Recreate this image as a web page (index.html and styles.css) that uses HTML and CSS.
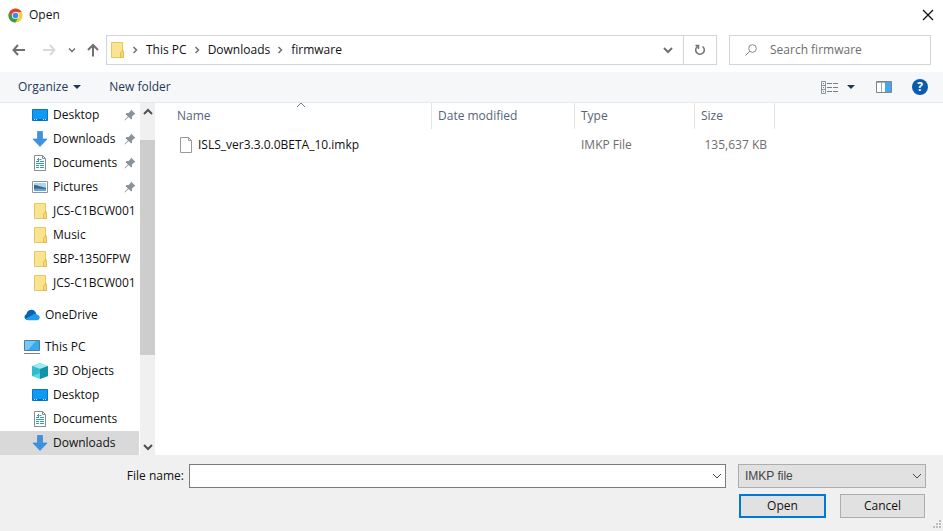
FILE: index.html
```html
<!DOCTYPE html>
<html lang="en">
<head>
<meta charset="utf-8">
<title>Open</title>
<meta name="viewport" content="width=device-width, initial-scale=1">
<link rel="stylesheet" href="styles.css">
</head>
<body>
<svg class="sprite" aria-hidden="true">
  <symbol id="folder" viewBox="0 0 16 16">
    <path d="M2.5.5h11v10h1v5h-12z" fill="#fbe48f" stroke="#e3c761"/>
    <path d="M11.5 15.5V11l1-1.500h1v-2l1 3v5z" fill="#f8d775" stroke="#dfbd4f"/>
  </symbol>
  <symbol id="desktop" viewBox="0 0 16 16">
    <path d="M.5 2.500h15v11H.5z" fill="#0d9bf5" stroke="#0877c4"/>
    <path d="M1 12h14v1.500H1z" fill="#0a6fb8"/>
    <path d="M2 12.500h1m1 0h1m6 0h1m1 0h1" stroke="#bfe6ff"/>
  </symbol>
  <symbol id="download" viewBox="0 0 16 16">
    <path d="M5.500.500h5V8h4.600L8 15.500.900 8h4.600z" fill="#3c93e0" stroke="#2f7fc9" stroke-width=".6"/>
  </symbol>
  <symbol id="document" viewBox="0 0 16 16">
    <path d="M2.500.500h8l3 3v12h-11z" fill="#fff" stroke="#858d94"/>
    <path d="M10.500.500v3h3" fill="none" stroke="#858d94"/>
    <path d="M7.500 4.500h2M8 6.500h4M4 8.500h8M4 10.500h3m1 0h4M4 12.500h3m1 0h4" stroke="#2fa3a3"/>
    <path d="M4 6.500h3M5 5l2-2M6.500 3v4" stroke="#4a8fb0"/>
  </symbol>
  <symbol id="picture" viewBox="0 0 16 16">
    <path d="M.5 2.500h15v11H.5z" fill="#fff" stroke="#8b959c"/>
    <path d="M2 4h12v8H2z" fill="#a9d4f2"/>
    <path d="M2 6c4 0 7 2 12 3v3H2z" fill="#31688f"/>
    <path d="M2 10c5-1 8 0 12 0v2H2z" fill="#6fa5c6"/>
  </symbol>
  <symbol id="cloud" viewBox="0 0 16 16">
    <path d="M3 13a3 3 0 0 1-.6-5.800A5 5 0 0 1 11.500 5l1 3-4 5z" fill="#0a62b5"/>
    <path d="M4 13.300a3 3 0 0 1-2.500-1.500L8 8.200a4 4 0 0 1 5.500-.4 2.800 2.800 0 0 1 0 5.500z" fill="#249be8"/>
  </symbol>
  <symbol id="computer" viewBox="0 0 16 16">
    <path d="M.5 1.500h15v10H.5z" fill="#36a9f1" stroke="#527d9c"/>
    <path d="M1 2h11L4 11H1z" fill="#75c9fa"/>
    <path d="M0 14.500h16" stroke="#76828b"/>
  </symbol>
  <symbol id="cube" viewBox="0 0 16 16">
    <path d="M0 3l8-3 8 3v10l-8 3-8-3z" fill="#5fd6de"/>
    <path d="M0 3l8-3 8 3-8 3z" fill="#9fe9ef"/>
    <path d="M8 6l8-3v10l-8 3z" fill="#1192ab"/>
    <path d="M0 3l8 3v4L0 13z" fill="#2fbccb"/>
  </symbol>
  <symbol id="pin" viewBox="0 0 12 12">
    <path d="M7 .5L11.500 5l-1.500.4-2 2 .1 2.100-1 1L4.600 8 1 11.500l-.5-.5L4 7.400 1.500 4.900l1-1 2.100.1 2-2z" fill="#8a9299"/>
  </symbol>
  <symbol id="down" viewBox="0 0 10 10">
    <path d="M1 3l4 4 4-4" fill="none" stroke="currentColor"/>
  </symbol>
  <symbol id="right" viewBox="0 0 6 8">
    <path d="M1.500 1l3 3-3 3" fill="none" stroke="#707070" stroke-width="1.500"/>
  </symbol>
</svg>

<header class="titlebar">
  <svg class="chrome" viewBox="0 0 16 16" aria-hidden="true">
    <circle cx="8" cy="8" r="7.500" fill="#f9cd3c"/>
    <path d="M1.500 4.250A7.500 7.500 0 0 0 8 15.500l3.200-5.600H4.800z" fill="#2f9e4f"/>
    <path d="M1.500 4.250A7.500 7.500 0 0 1 14.500 4.250H8L4.800 9.900z" fill="#dc4437"/>
    <circle cx="8" cy="8" r="3.800" fill="#fff"/>
    <circle cx="8" cy="8" r="3" fill="#4384ee"/>
  </svg>
  <h1 class="title">Open</h1>
  <button class="close" aria-label="Close"><svg viewBox="0 0 12 12"><path d="M1 1l10 10M11 1L1 11" stroke="#111" stroke-width="1.300"/></svg></button>
</header>

<nav class="navbar" aria-label="Location">
  <div class="history">
    <button class="arrow" aria-label="Back"><svg viewBox="0 0 14 14"><path d="M6 2L1.500 7 6 12M1.500 7H13"/></svg></button>
    <button class="arrow off" aria-label="Forward" disabled><svg viewBox="0 0 14 14"><path d="M8 2l4.500 5L8 12M12.500 7H1"/></svg></button>
    <button class="recent" aria-label="Recent locations"><svg viewBox="0 0 8 8"><path d="M1 2.500l3 3 3-3"/></svg></button>
    <button class="arrow" aria-label="Up"><svg viewBox="0 0 14 14"><path d="M2 7l5-5 5 5M7 2v11.500"/></svg></button>
  </div>
  <div class="address">
    <svg class="icon" aria-hidden="true"><use href="#folder"/></svg>
    <svg class="sep" aria-hidden="true"><use href="#right"/></svg>
    <a href="#pc">This PC</a>
    <svg class="sep" aria-hidden="true"><use href="#right"/></svg>
    <a href="#downloads">Downloads</a>
    <svg class="sep" aria-hidden="true"><use href="#right"/></svg>
    <a href="#firmware">firmware</a>
    <button class="drop" aria-label="Previous locations"><svg viewBox="0 0 10 10"><path d="M1 3l4 4 4-4"/></svg></button>
    <button class="refresh" aria-label="Refresh"><svg viewBox="0 0 12 12"><path d="M3.500 2.500a4.300 4.300 0 1 0 5 0M1.500 1.500h3v3.500"/></svg></button>
  </div>
  <label class="search">
    <svg viewBox="0 0 12 12" aria-hidden="true"><circle cx="7.500" cy="4.500" r="3.800"/><path d="M4.800 7.200L.5 11.500"/></svg>
    <input type="search" placeholder="Search firmware" aria-label="Search firmware">
  </label>
</nav>

<div class="toolbar">
  <button class="organize">Organize <svg viewBox="0 0 8 4" aria-hidden="true"><path d="M0 0h8L4 4z" fill="#1e3957"/></svg></button>
  <button>New folder</button>
  <div class="tools">
    <button class="view" aria-label="Change view">
      <svg viewBox="0 0 17 13"><path d="M.5.500h4v12h-4zM.5 4.500h4M.5 8.500h4" fill="none" stroke="#8b9299"/><path d="M2 2.500h1m-1 4h1m-1 4h1M6 2.500h5m1 0h5M6 6.500h5m1 0h5M6 10.500h5m1 0h5" stroke="#777f87"/></svg>
      <svg class="tri" viewBox="0 0 8 4"><path d="M0 0h8L4 4z" fill="#1e3957"/></svg>
    </button>
    <button class="preview" aria-label="Preview pane"><svg viewBox="0 0 16 12"><path d="M.5.500h15v11H.5z" fill="#fff" stroke="#7b858e"/><path d="M1 1.500h14M5.500 1v10" stroke="#a2aab1"/><path d="M9 1h6v10H9z" fill="#45a5ee"/></svg></button>
    <button class="help" aria-label="Help">?</button>
  </div>
</div>

<main class="content">
  <nav class="tree" aria-label="Folders">
    <ul>
      <li><a href="#d1"><svg class="icon"><use href="#desktop"/></svg>Desktop<svg class="pin"><use href="#pin"/></svg></a></li>
      <li><a href="#d2"><svg class="icon"><use href="#download"/></svg>Downloads<svg class="pin"><use href="#pin"/></svg></a></li>
      <li><a href="#d3"><svg class="icon"><use href="#document"/></svg>Documents<svg class="pin"><use href="#pin"/></svg></a></li>
      <li><a href="#d4"><svg class="icon"><use href="#picture"/></svg>Pictures<svg class="pin"><use href="#pin"/></svg></a></li>
      <li><a href="#d5"><svg class="icon"><use href="#folder"/></svg>JCS-C1BCW001</a></li>
      <li><a href="#d6"><svg class="icon"><use href="#folder"/></svg>Music</a></li>
      <li><a href="#d7"><svg class="icon"><use href="#folder"/></svg>SBP-1350FPW</a></li>
      <li><a href="#d8"><svg class="icon"><use href="#folder"/></svg>JCS-C1BCW001</a></li>
    </ul>
    <ul>
      <li><a class="root" href="#onedrive"><svg class="icon"><use href="#cloud"/></svg>OneDrive</a></li>
    </ul>
    <ul>
      <li><a class="root" href="#pc"><svg class="icon"><use href="#computer"/></svg>This PC</a></li>
      <li><a href="#p1"><svg class="icon"><use href="#cube"/></svg>3D Objects</a></li>
      <li><a href="#p2"><svg class="icon"><use href="#desktop"/></svg>Desktop</a></li>
      <li><a href="#p3"><svg class="icon"><use href="#document"/></svg>Documents</a></li>
      <li><a class="selected" href="#p4" aria-current="true"><svg class="icon"><use href="#download"/></svg>Downloads</a></li>
    </ul>
  </nav>
  <div class="scrollbar">
    <button class="flip" aria-label="Scroll up"><svg viewBox="0 0 10 10"><path d="M1 3l4 4 4-4"/></svg></button>
    <div class="track"><div class="thumb"></div></div>
    <button aria-label="Scroll down"><svg viewBox="0 0 10 10"><path d="M1 3l4 4 4-4"/></svg></button>
  </div>
  <section class="files">
    <table>
      <thead>
        <tr><th class="c-name" aria-sort="ascending">Name<svg class="sort" viewBox="0 0 10 10" aria-hidden="true"><path d="M1 7l4-4 4 4" fill="none" stroke="#777"/></svg></th><th class="c-date">Date modified</th><th class="c-type">Type</th><th class="c-size">Size</th><td></td></tr>
      </thead>
      <tbody>
        <tr><td class="name"><div class="file"><svg class="icon" viewBox="0 0 16 16" aria-hidden="true"><path d="M2.500.500h8l3 3v12h-11z" fill="#fdfdfd" stroke="#999"/><path d="M10.500.500v3h3" fill="none" stroke="#999"/></svg>ISLS_ver3.3.0.0BETA_10.imkp</div></td><td></td><td>IMKP File</td><td class="size">135,637 KB</td><td></td></tr>
      </tbody>
    </table>
  </section>
</main>

<footer class="footer">
  <label class="flabel" for="filename">File name:</label>
  <div class="combo">
    <input id="filename" type="text">
    <svg aria-hidden="true"><use href="#down"/></svg>
  </div>
  <div class="side">
    <div class="combo type">
      <select aria-label="File type"><option>IMKP file</option></select>
      <svg aria-hidden="true"><use href="#down"/></svg>
    </div>
    <div class="actions">
      <button class="btn primary">Open</button>
      <button class="btn">Cancel</button>
    </div>
  </div>
  <svg class="grip" viewBox="0 0 10 10" aria-hidden="true"><path d="M7 0h2v2H7zM4 3h2v2H4zM7 3h2v2H7zM1 6h2v2H1zM4 6h2v2H4zM7 6h2v2H7z" fill="#bdbdbd"/></svg>
</footer>
</body>
</html>
```
FILE: styles.css
```css
* { box-sizing: border-box; }

body {
  margin: 0;
  min-height: 100vh;
  display: flex;
  flex-direction: column;
  background: #fff;
  color: #111;
  font: 12px/16px "Open Sans", "Noto Sans", sans-serif;
}

button, input, select { font: inherit; color: inherit; margin: 0; }
button { border: 0; padding: 0; background: none; display: flex; align-items: center; justify-content: center; }
a { color: inherit; text-decoration: none; }
ul { list-style: none; margin: 0; padding: 0; }
svg { display: block; flex: none; }
.sprite { position: absolute; width: 0; height: 0; }
.icon { width: 16px; height: 16px; }

/* Title bar */
.titlebar { display: flex; align-items: center; height: 30px; padding: 0 9px 0 8px; }
.chrome { width: 15px; height: 15px; }
.title { flex: 1; margin: 0 0 0 6px; font-size: 12px; font-weight: 400; }
.close svg { width: 12px; height: 12px; }

/* Navigation bar */
.navbar { display: flex; align-items: center; height: 40px; margin-bottom: 2px; padding: 0 12px; gap: 12px; }
.history { display: flex; align-items: center; width: 88px; }
.history svg, .drop svg, .refresh svg, .scrollbar svg { fill: none; stroke: #707070; stroke-width: 2; }
.arrow { width: 14px; }
.arrow svg { width: 14px; height: 14px; }
.arrow.off { margin-left: 16px; }
.arrow.off svg { stroke: #d9d9d9; }
.recent { margin: 0 10px 0 12px; }
.recent svg { width: 8px; height: 8px; stroke-width: 1.500; }
.address {
  flex: 1;
  display: flex;
  align-items: center;
  height: 30px;
  margin-left: -6px;
  padding-left: 2px;
  border: 1px solid #d4d4d4;
}
.sep { width: 6px; height: 8px; margin: 0 8px 0 7px; }
.drop { margin-left: auto; width: 30px; height: 100%; }
.drop svg { width: 10px; height: 10px; }
.refresh { width: 33px; height: 100%; border-left: 1px solid #d4d4d4; }
.refresh svg { width: 12px; height: 12px; stroke-width: 1.500; }
.search { display: flex; align-items: center; gap: 13px; width: 202px; height: 30px; padding-left: 15px; border: 1px solid #d4d4d4; }
.search svg { width: 12px; height: 12px; fill: none; stroke: #888; }
.search input { flex: 1; min-width: 0; border: 0; padding: 0; outline: 0; background: none; }
.search input::placeholder { color: #6d6d6d; opacity: 1; }

/* Command bar */
.toolbar {
  display: flex;
  align-items: center;
  gap: 28px;
  height: 31px;
  padding: 0 15px 0 18px;
  background: #f6f7f9;
  border-bottom: 1px solid #e6e8ec;
  color: #1e3957;
}
.organize { gap: 5px; }
.organize svg, .tri { width: 8px; height: 4px; }
.tools { display: flex; align-items: center; margin-left: auto; }
.view { gap: 9px; }
.view svg:first-child { width: 17px; height: 13px; }
.preview { margin: 0 20px 0 21px; }
.preview svg { width: 16px; height: 12px; }
.help { width: 16px; height: 16px; border-radius: 50%; background: #0a5bb0; color: #fff; font-weight: 700; }

/* Folder tree */
.content { flex: 1; display: flex; }
.tree { width: 139px; display: flex; flex-direction: column; gap: 8px; }
.tree a { display: flex; align-items: center; gap: 5px; height: 24px; padding: 0 3px 0 32px; white-space: nowrap; }
.tree a.root { padding-left: 24px; }
.tree a.selected { background: #d9d9d9; }
.pin { width: 12px; height: 12px; margin-left: auto; }
.scrollbar { display: flex; flex-direction: column; width: 17px; padding: 0 1px; background: #f0f0f0; background-clip: content-box; }
.scrollbar button { height: 17px; }
.scrollbar svg { width: 10px; height: 10px; stroke: #505050; }
.flip svg { transform: rotate(180deg); }
.track { flex: 1; display: flex; flex-direction: column; padding-top: 20px; }
.thumb { height: 72%; background: #cdcdcd; }

/* File list */
.files { flex: 1; padding-left: 14px; }
table { width: 100%; border-spacing: 0; table-layout: fixed; }
th, td { padding: 0 6px; text-align: left; font-weight: 400; color: #6d6d6d; white-space: nowrap; }
th { height: 26px; border-right: 1px solid #e5e5e5; color: #56637a; }
th.c-name { width: 262px; padding-left: 7px; }
.c-date { width: 143px; }
.c-type { width: 120px; }
.c-size { width: 80px; }
.c-name { position: relative; }
.sort { position: absolute; top: -3px; left: 50%; width: 10px; height: 10px; margin-left: -5px; }
tbody td { height: 32px; }
td.name { padding-left: 8px; color: #111; }
.file { display: flex; align-items: center; gap: 4px; }
td.size { padding-right: 8px; text-align: right; }

/* Footer */
.footer { position: relative; display: flex; align-items: flex-start; height: 76px; padding: 9px 17px 0 16px; background: #f0f0f0; }
.flabel { width: 173px; padding: 4px 5px 0 0; text-align: right; }
.combo { position: relative; flex: 1; height: 24px; }
.combo input, .combo select { display: block; width: 100%; height: 100%; padding: 0 24px 0 6px; border: 1px solid #7a7a7a; border-radius: 0; background: #fff; outline: 0; }
.combo svg { position: absolute; right: 4px; top: 7px; width: 10px; height: 10px; color: #444; pointer-events: none; }
.combo select { appearance: none; background: #e1e1e1; border-color: #adadad; color: #444; font-family: "Liberation Sans", sans-serif; }
.side { width: 188px; margin-left: 12px; }
.actions { display: flex; gap: 14px; padding: 6px 1px 0; }
.btn { flex: 1; height: 24px; border: 1px solid #adadad; background: #e1e1e1; }
.btn.primary { border: 2px solid #0078d7; }
.grip { position: absolute; right: 1px; bottom: 1px; width: 10px; height: 10px; }
```
